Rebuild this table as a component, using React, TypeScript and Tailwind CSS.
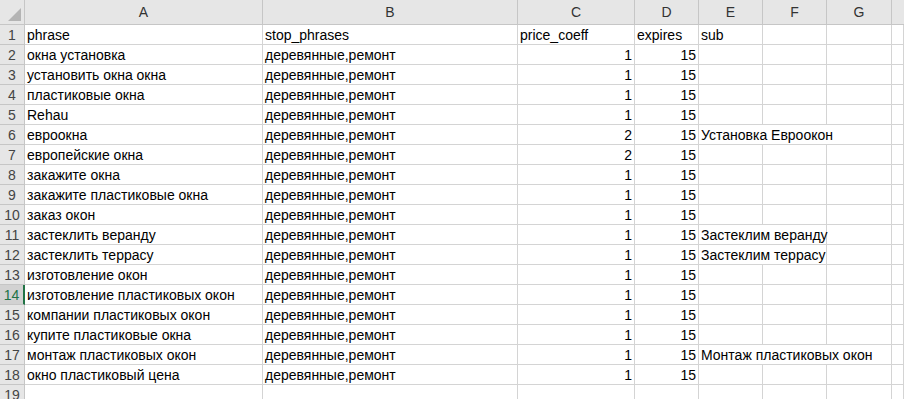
import React from 'react';

type Row = {
  phrase: string;
  stop: string;
  coeff: number;
  expires: number;
  sub?: string;
  span?: number;
};

const rows: Row[] = [
  { phrase: 'окна установка', stop: 'деревянные,ремонт', coeff: 1, expires: 15 },
  { phrase: 'установить окна окна', stop: 'деревянные,ремонт', coeff: 1, expires: 15 },
  { phrase: 'пластиковые окна', stop: 'деревянные,ремонт', coeff: 1, expires: 15 },
  { phrase: 'Rehau', stop: 'деревянные,ремонт', coeff: 1, expires: 15 },
  { phrase: 'евроокна', stop: 'деревянные,ремонт', coeff: 2, expires: 15, sub: 'Установка Евроокон', span: 3 },
  { phrase: 'европейские окна', stop: 'деревянные,ремонт', coeff: 2, expires: 15 },
  { phrase: 'закажите окна', stop: 'деревянные,ремонт', coeff: 1, expires: 15 },
  { phrase: 'закажите пластиковые окна', stop: 'деревянные,ремонт', coeff: 1, expires: 15 },
  { phrase: 'заказ окон', stop: 'деревянные,ремонт', coeff: 1, expires: 15 },
  { phrase: 'застеклить веранду', stop: 'деревянные,ремонт', coeff: 1, expires: 15, sub: 'Застеклим веранду', span: 2 },
  { phrase: 'застеклить террасу', stop: 'деревянные,ремонт', coeff: 1, expires: 15, sub: 'Застеклим террасу', span: 2 },
  { phrase: 'изготовление окон', stop: 'деревянные,ремонт', coeff: 1, expires: 15 },
  { phrase: 'изготовление пластиковых окон', stop: 'деревянные,ремонт', coeff: 1, expires: 15 },
  { phrase: 'компании пластиковых окон', stop: 'деревянные,ремонт', coeff: 1, expires: 15 },
  { phrase: 'купите пластиковые окна', stop: 'деревянные,ремонт', coeff: 1, expires: 15 },
  { phrase: 'монтаж пластиковых окон', stop: 'деревянные,ремонт', coeff: 1, expires: 15, sub: 'Монтаж пластиковых окон', span: 3 },
  { phrase: 'окно пластиковый цена', stop: 'деревянные,ремонт', coeff: 1, expires: 15 },
];

const colLetters = ['A', 'B', 'C', 'D', 'E', 'F', 'G'];

const grid = 'grid grid-cols-[25px_238px_255px_117px_64px_64px_64px_65px_1fr]';
const cell = 'h-[20px] border-r border-b border-[#d4d4d4] px-[2px] pt-[1px] flex items-center whitespace-nowrap overflow-visible';
const rowHead = 'h-[20px] border-r border-b border-[#c6c6c6] bg-[#e6e6e6] pt-[1px] flex items-center justify-center text-[#444]';

const RowHeader = ({ n, selected }: { n: number; selected?: boolean }) =>
  selected ? (
    <div className="h-[20px] border-b border-[#c6c6c6] border-r-2 border-r-[#217346] bg-[#d2d2d2] pt-[1px] flex items-center justify-center text-[#217346]">{n}</div>
  ) : (
    <div className={rowHead}>{n}</div>
  );

const App: React.FC = () => {
  return (
    <div
      className="w-[904px] h-[399px] overflow-hidden bg-white text-[14px] text-black"
      style={{ fontFamily: '"Liberation Sans", "Noto Sans", Arial, sans-serif' }}
    >
      {/* column header row */}
      <div className={grid}>
        <div className="h-[25px] border-r border-b border-[#c6c6c6] bg-[#e6e6e6] flex items-end justify-end p-[3px]">
          <div className="w-0 h-0 border-l-[13px] border-l-transparent border-b-[13px] border-b-[#b4b4b4]" />
        </div>
        {colLetters.map(l => (
          <div key={l} className="h-[25px] border-r border-b border-[#c6c6c6] bg-[#e6e6e6] flex items-center justify-center text-[#333]">{l}</div>
        ))}
        <div className="h-[25px] border-b border-[#c6c6c6] bg-[#e6e6e6]" />
      </div>

      {/* header data row */}
      <div className={grid}>
        <RowHeader n={1} />
        <div className={cell}>phrase</div>
        <div className={cell}>stop_phrases</div>
        <div className={cell}>price_coeff</div>
        <div className={cell}>expires</div>
        <div className={cell}>sub</div>
        <div className={cell} />
        <div className={cell} />
        <div className={cell} />
      </div>

      {rows.map((r, i) => {
        const n = i + 2;
        return (
          <div key={n} className={grid}>
            <RowHeader n={n} selected={n === 14} />
            <div className={cell}>{r.phrase}</div>
            <div className={cell}>{r.stop}</div>
            <div className={`${cell} justify-end`}>{r.coeff}</div>
            <div className={`${cell} justify-end`}>{r.expires}</div>
            {r.span === 3 ? (
              <div className={`${cell} col-span-3`}>{r.sub}</div>
            ) : r.span === 2 ? (
              <>
                <div className={`${cell} col-span-2`}>{r.sub}</div>
                <div className={cell} />
              </>
            ) : (
              <>
                <div className={cell} />
                <div className={cell} />
                <div className={cell} />
              </>
            )}
            <div className={cell} />
          </div>
        );
      })}

      <div className={grid}>
        <RowHeader n={19} />
        <div className={cell} />
        <div className={cell} />
        <div className={cell} />
        <div className={cell} />
        <div className={cell} />
        <div className={cell} />
        <div className={cell} />
        <div className={cell} />
      </div>
    </div>
  );
};

export default App;
